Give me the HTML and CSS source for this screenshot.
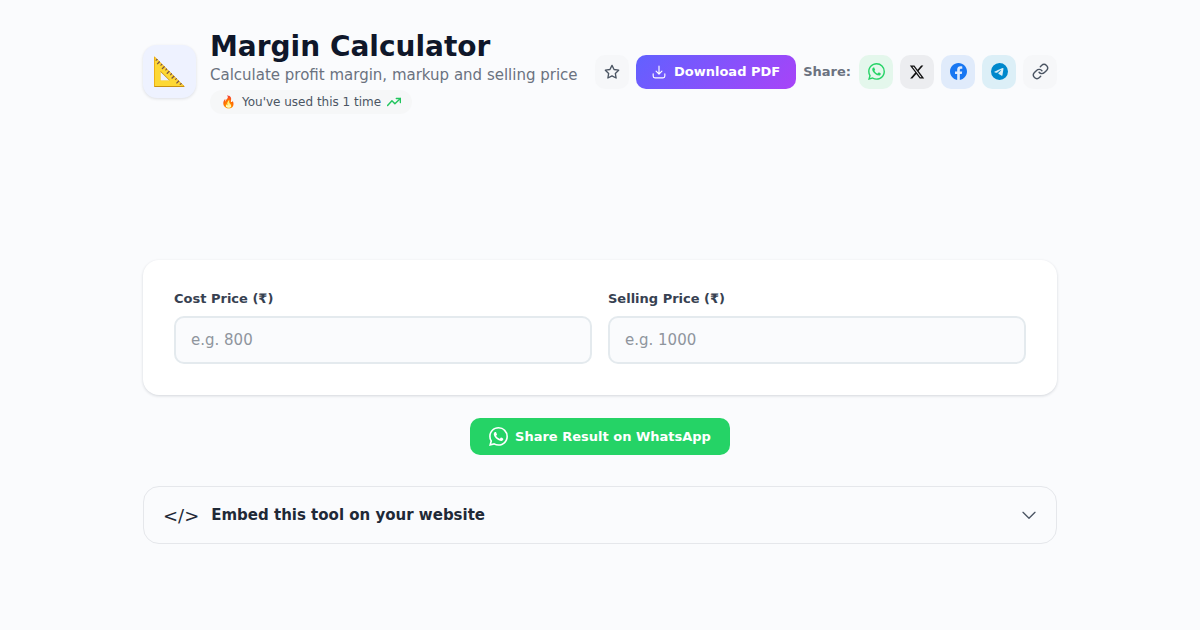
FILE: index.html
```html
<!DOCTYPE html>
<html lang="en">
<head>
  <meta charset="UTF-8">
  <meta name="viewport" content="width=device-width, initial-scale=1">
  <title>Margin Calculator</title>
  <link rel="stylesheet" href="styles.css">
</head>
<body>

  <!-- Shared icon shapes -->
  <svg class="sprite" aria-hidden="true">
    <symbol id="icon-whatsapp" viewBox="0 0 24 24">
      <path fill="currentColor" d="M17.472 14.382c-.297-.149-1.758-.867-2.03-.967-.273-.099-.471-.148-.67.15-.197.297-.767.966-.94 1.164-.173.199-.347.223-.644.075-.297-.15-1.255-.463-2.39-1.475-.883-.788-1.48-1.761-1.653-2.059-.173-.297-.018-.458.13-.606.134-.133.298-.347.446-.52.149-.174.198-.298.298-.497.099-.198.05-.371-.025-.52-.075-.149-.669-1.612-.916-2.207-.242-.579-.487-.5-.669-.51-.173-.008-.371-.01-.57-.01-.198 0-.52.074-.792.372-.272.297-1.04 1.016-1.04 2.479 0 1.462 1.065 2.875 1.213 3.074.149.198 2.096 3.2 5.077 4.487.709.306 1.262.489 1.694.625.712.227 1.36.195 1.871.118.571-.085 1.758-.719 2.006-1.413.248-.694.248-1.289.173-1.413-.074-.124-.272-.198-.57-.347m-5.421 7.403h-.004a9.87 9.87 0 01-5.031-1.378l-.361-.214-3.741.982.998-3.648-.235-.374a9.86 9.86 0 01-1.51-5.26c.001-5.45 4.436-9.884 9.888-9.884 2.64 0 5.122 1.03 6.988 2.898a9.825 9.825 0 012.893 6.994c-.003 5.45-4.437 9.884-9.885 9.884m8.413-18.297A11.815 11.815 0 0012.05 0C5.495 0 .16 5.335.157 11.892c0 2.096.547 4.142 1.588 5.945L.057 24l6.305-1.654a11.882 11.882 0 005.683 1.448h.005c6.554 0 11.89-5.335 11.893-11.893a11.821 11.821 0 00-3.48-8.413z"/>
    </symbol>
  </svg>

  <main class="page">
    <header class="tool-header">
      <div class="tool-icon">📐</div>
      <div class="tool-title">
        <h1>Margin Calculator</h1>
        <p>Calculate profit margin, markup and selling price</p>
        <div class="usage">
          <span class="flame">🔥</span>
          <span>You've used this 1 time</span>
          <svg class="trend" viewBox="0 0 24 24" fill="none" stroke="currentColor" stroke-width="2.5" stroke-linecap="round" stroke-linejoin="round">
            <path d="M1 18l7.500-8 5 5L23 6"/>
            <path d="M16 6h7v7"/>
          </svg>
        </div>
      </div>

      <div class="actions">
        <button type="button" class="icon-btn star" aria-label="Add to favourites">
          <svg viewBox="0 0 24 24" fill="none" stroke="currentColor" stroke-width="2" stroke-linejoin="round">
            <path d="M12 2l3.090 6.260L22 9.270l-5 4.870 1.180 6.880L12 17.770l-6.180 3.250L7 14.140 2 9.270l6.910-1.010z"/>
          </svg>
        </button>
        <button type="button" class="download-btn">
          <svg viewBox="0 0 24 24" fill="none" stroke="currentColor" stroke-width="2" stroke-linecap="round" stroke-linejoin="round">
            <path d="M12 2v13M7 10.500l5 5 5-5"/>
            <path d="M2 15v4a3 3 0 003 3h14a3 3 0 003-3v-4"/>
          </svg>
          Download PDF
        </button>
        <span class="share-label">Share:</span>
        <a href="#whatsapp" class="icon-btn whatsapp" aria-label="Share on WhatsApp">
          <svg><use href="#icon-whatsapp"/></svg>
        </a>
        <a href="#x" class="icon-btn x" aria-label="Share on X">
          <svg viewBox="0 0 24 24">
            <path fill="currentColor" d="M18.244 2.250h3.308l-7.227 8.260 8.502 11.240H16.170l-5.214-6.817L4.990 21.750H1.680l7.730-8.835L1.254 2.250H8.080l4.713 6.231zm-1.161 17.520h1.833L7.084 4.126H5.117z"/>
          </svg>
        </a>
        <a href="#facebook" class="icon-btn facebook" aria-label="Share on Facebook">
          <svg viewBox="0 0 24 24">
            <path fill="currentColor" d="M24 12.073c0-6.627-5.373-12-12-12s-12 5.373-12 12c0 5.990 4.388 10.954 10.125 11.854v-8.385H7.078v-3.470h3.047V9.430c0-3.007 1.792-4.669 4.533-4.669 1.312 0 2.686.235 2.686.235v2.953H15.830c-1.491 0-1.956.925-1.956 1.874v2.250h3.328l-.532 3.470h-2.796v8.385C19.612 23.027 24 18.062 24 12.073z"/>
          </svg>
        </a>
        <a href="#telegram" class="icon-btn telegram" aria-label="Share on Telegram">
          <svg viewBox="0 0 24 24">
            <path fill="currentColor" d="M11.944 0A12 12 0 000 12a12 12 0 0012 12 12 12 0 0012-12A12 12 0 0012 0a12 12 0 00-.056 0zm4.962 7.224c.1-.002.321.023.465.14a.506.506 0 01.171.325c.016.093.036.306.020.472-.180 1.898-.962 6.502-1.360 8.627-.168.900-.499 1.201-.820 1.230-.696.065-1.225-.460-1.900-.902-1.056-.693-1.653-1.124-2.678-1.800-1.185-.780-.417-1.210.258-1.910.177-.184 3.247-2.977 3.307-3.230.007-.032.014-.150-.056-.212s-.174-.041-.249-.024c-.106.024-1.793 1.140-5.061 3.345-.480.330-.913.490-1.302.480-.428-.008-1.252-.241-1.865-.440-.752-.245-1.349-.374-1.297-.789.027-.216.325-.437.893-.663 3.498-1.524 5.830-2.529 6.998-3.014 3.332-1.386 4.025-1.627 4.476-1.635z"/>
          </svg>
        </a>
        <button type="button" class="icon-btn" aria-label="Copy link">
          <svg viewBox="0 0 24 24" fill="none" stroke="currentColor" stroke-width="2" stroke-linecap="round" stroke-linejoin="round">
            <path d="M10 13a5 5 0 007.540.540l3-3a5 5 0 00-7.070-7.070l-1.720 1.710"/>
            <path d="M14 11a5 5 0 00-7.540-.540l-3 3a5 5 0 007.070 7.070l1.710-1.710"/>
          </svg>
        </button>
      </div>
    </header>

    <form class="card">
      <div class="field">
        <label for="cost">Cost Price (₹)</label>
        <input type="number" id="cost" name="cost" placeholder="e.g. 800">
      </div>
      <div class="field">
        <label for="selling">Selling Price (₹)</label>
        <input type="number" id="selling" name="selling" placeholder="e.g. 1000">
      </div>
    </form>

    <button type="button" class="share-result">
      <svg><use href="#icon-whatsapp"/></svg>
      Share Result on WhatsApp
    </button>

    <button type="button" class="embed" aria-expanded="false">
      <span class="code">&lt;/&gt;</span>
      <span>Embed this tool on your website</span>
      <svg viewBox="0 0 24 24" fill="none" stroke="currentColor" stroke-width="2" stroke-linecap="round" stroke-linejoin="round">
        <path d="M3 8l9 9 9-9"/>
      </svg>
    </button>
  </main>

</body>
</html>
```

FILE: styles.css
```css
* {
  box-sizing: border-box;
}
body {
  margin: 0;
  background: #fafbfd;
  color: #0f172a;
  font-family: "DejaVu Sans", "Noto Color Emoji", sans-serif;
  font-size: 16px;
}
button,
input {
  font-family: inherit;
}
button {
  border: none;
  cursor: pointer;
}
.sprite {
  display: none;
}
.page {
  max-width: 946px;
  margin: 0 auto;
  padding: 29px 16px;
  display: flex;
  flex-direction: column;
}

/* Header */
.tool-header {
  display: flex;
  align-items: center;
  gap: 14px;
  margin-bottom: 146px;
}
.tool-icon {
  width: 53px;
  height: 53px;
  border-radius: 14px;
  background: #eef2ff;
  box-shadow: 0 1px 3px rgba(15, 23, 42, 0.12);
  display: flex;
  align-items: center;
  justify-content: center;
  font-size: 28px;
}
.tool-title {
  flex: 1;
}
h1 {
  margin: 0;
  font-size: 28px;
  line-height: 36px;
}
.tool-title p {
  margin: 0;
  color: #6b7280;
  font-size: 15px;
  line-height: 20px;
  white-space: nowrap;
}
.usage {
  display: inline-flex;
  align-items: center;
  gap: 6px;
  margin-top: 5px;
  padding: 0 11px;
  border-radius: 20px;
  background: #f6f7f8;
  color: #4b5563;
  font-size: 12px;
  line-height: 24px;
}
.trend {
  width: 14px;
  height: 14px;
  color: #22c55e;
}

.actions {
  display: flex;
  align-items: center;
  gap: 7px;
}
.icon-btn {
  width: 34px;
  height: 34px;
  padding: 0;
  border-radius: 10px;
  background: #f6f7f9;
  color: #4b5563;
  display: flex;
  align-items: center;
  justify-content: center;
}
.icon-btn svg {
  width: 17px;
  height: 17px;
}
.icon-btn.star svg {
  width: 16px;
  height: 16px;
}
.icon-btn.whatsapp {
  background: #e4f7ec;
  color: #25d366;
}
.icon-btn.x {
  background: #ecedf0;
  color: #111;
}
.icon-btn.x svg {
  width: 16px;
  height: 16px;
}
.icon-btn.facebook {
  background: #e0ebfb;
  color: #1877f2;
}
.icon-btn.telegram {
  background: #dceff7;
  color: #0088cc;
}
.download-btn {
  display: flex;
  align-items: center;
  gap: 8px;
  height: 34px;
  padding: 0 16px;
  border-radius: 10px;
  background: linear-gradient(135deg, #6161ff, #a843f8);
  color: #fff;
  font-size: 13px;
  font-weight: 700;
  white-space: nowrap;
}
.download-btn svg {
  width: 14px;
  height: 14px;
}
.share-label {
  margin-right: 1px;
  color: #6b7280;
  font-size: 13px;
  font-weight: 700;
}

/* Calculator */
.card {
  display: grid;
  grid-template-columns: 1fr 1fr;
  gap: 16px;
  padding: 30px 31px 31px;
  border-radius: 16px;
  background: #fff;
  box-shadow: 0 1px 3px rgba(15, 23, 42, 0.16);
}
.field {
  display: flex;
  flex-direction: column;
  gap: 8px;
}
.field label {
  color: #374151;
  font-size: 13px;
  font-weight: 700;
  line-height: 18px;
}
.field input {
  width: 100%;
  height: 48px;
  padding: 0 15px;
  border: 2px solid #e4eaee;
  border-radius: 10px;
  background: #fafbfd;
  color: #0f172a;
  font-size: 15px;
}
.field input::placeholder {
  color: #8f959d;
}

.share-result {
  display: flex;
  align-items: center;
  gap: 7px;
  align-self: center;
  height: 37px;
  margin: 23px 0 31px;
  padding: 0 19px;
  border-radius: 10px;
  background: #25d366;
  color: #fff;
  font-size: 13px;
  font-weight: 700;
}
.share-result svg {
  width: 19px;
  height: 19px;
}

.embed {
  display: flex;
  align-items: center;
  gap: 12px;
  height: 58px;
  padding: 0 19px;
  border: 1px solid #e5e7eb;
  border-radius: 16px;
  background: #fafbfd;
  color: #1f2937;
  font-size: 15px;
  font-weight: 700;
}
.embed .code {
  font-size: 18px;
  font-weight: 400;
}
.embed svg {
  width: 16px;
  height: 16px;
  margin-left: auto;
  color: #4b5563;
}

@media (max-width: 900px) {
  .tool-header {
    flex-wrap: wrap;
    margin-bottom: 40px;
  }
  .tool-title p {
    white-space: normal;
  }
  .actions {
    flex-wrap: wrap;
  }
}
@media (max-width: 560px) {
  .card {
    grid-template-columns: 1fr;
  }
}
```
